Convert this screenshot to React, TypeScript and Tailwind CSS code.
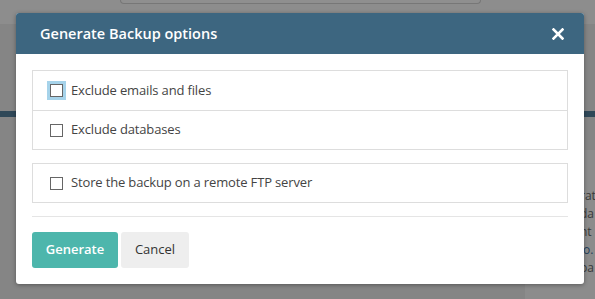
import React, { useState } from 'react';

const options = ['Exclude emails and files', 'Exclude databases'];

export default function App() {
  const [checked, setChecked] = useState<Record<string, boolean>>({});
  const toggle = (key: string) => setChecked({ ...checked, [key]: !checked[key] });

  return <div className="relative w-[595px] h-[299px] overflow-hidden bg-[#858585] font-['Open_Sans',sans-serif]">
      {/* Dimmed page behind the modal */}
      <div className="h-[24px] bg-[#8d8d8d] flex justify-center">
        <div className="ml-[5px] w-[361px] h-[4px] border border-t-0 border-[#777] rounded-b-md bg-[#8f8f8f]" />
      </div>
      <div className="mt-[87px] h-[6px] bg-[#2f4858]" />
      <div className="absolute left-[525px] top-[150px] w-[70px] h-[149px] bg-[#8c8c8c] pt-[37px] pl-[55px] text-[12px] leading-[18px] text-[#3a3a3a]">
        <div>rat</div>
        <div>da</div>
        <div>nt</div>
        <div className="text-[#24405a]">lo.</div>
        <div>pa</div>
      </div>

      {/* Modal */}
      <div className="absolute left-[16px] top-[13px] w-[568px] bg-white rounded-[3px] shadow-[0_1px_4px_rgba(0,0,0,0.35)] overflow-hidden">
        <div className="h-[41px] bg-[#3d6680] flex items-center justify-between pl-[24px] pr-[20px]">
          <h2 className="text-[14.5px] font-semibold text-white">Generate Backup options</h2>
          <button className="text-white">
            <svg width="12" height="12" viewBox="0 0 12 12">
              <path d="M1.5 1.5 L10.5 10.5 M10.5 1.5 L1.5 10.5" stroke="white" strokeWidth="2.6" strokeLinecap="square" />
            </svg>
          </button>
        </div>
        <div className="p-[16px]">
          <div className="border border-[#dddddd]">
            {options.map((opt, i) => <label key={opt} className={`h-[39px] flex items-center pl-[17px] gap-[8px] text-[13px] tracking-[-0.15px] text-[#444] cursor-pointer ${i > 0 ? 'border-t border-[#dddddd]' : ''}`}>
                <span className={`w-[13px] h-[13px] border border-[#666] bg-white ${i === 0 ? 'outline-[3px] outline outline-[#a6d3ea]' : ''}`} onClick={() => toggle(opt)}>
                  {checked[opt] && <span className="block w-full h-full bg-[#3d6680]" />}
                </span>
                {opt}
              </label>)}
          </div>
          <div className="mt-[13px] border border-[#dddddd]">
            <label className="h-[38px] flex items-center pl-[17px] gap-[8px] text-[13px] tracking-[-0.15px] text-[#444]">
              <span className="w-[13px] h-[13px] border border-[#666] bg-white" />
              Store the backup on a remote FTP server
            </label>
          </div>
          <div className="mt-[13px] border-t border-[#e5e5e5]" />
          <div className="mt-[15px] flex gap-[3px]">
            <button className="h-[36px] w-[86px] rounded-[3px] bg-[#4db6ac] text-white text-[13px] font-semibold">Generate</button>
            <button className="h-[36px] w-[68px] rounded-[3px] bg-[#eeeeee] text-[#333] text-[13px]">Cancel</button>
          </div>
        </div>
      </div>
    </div>;
}
